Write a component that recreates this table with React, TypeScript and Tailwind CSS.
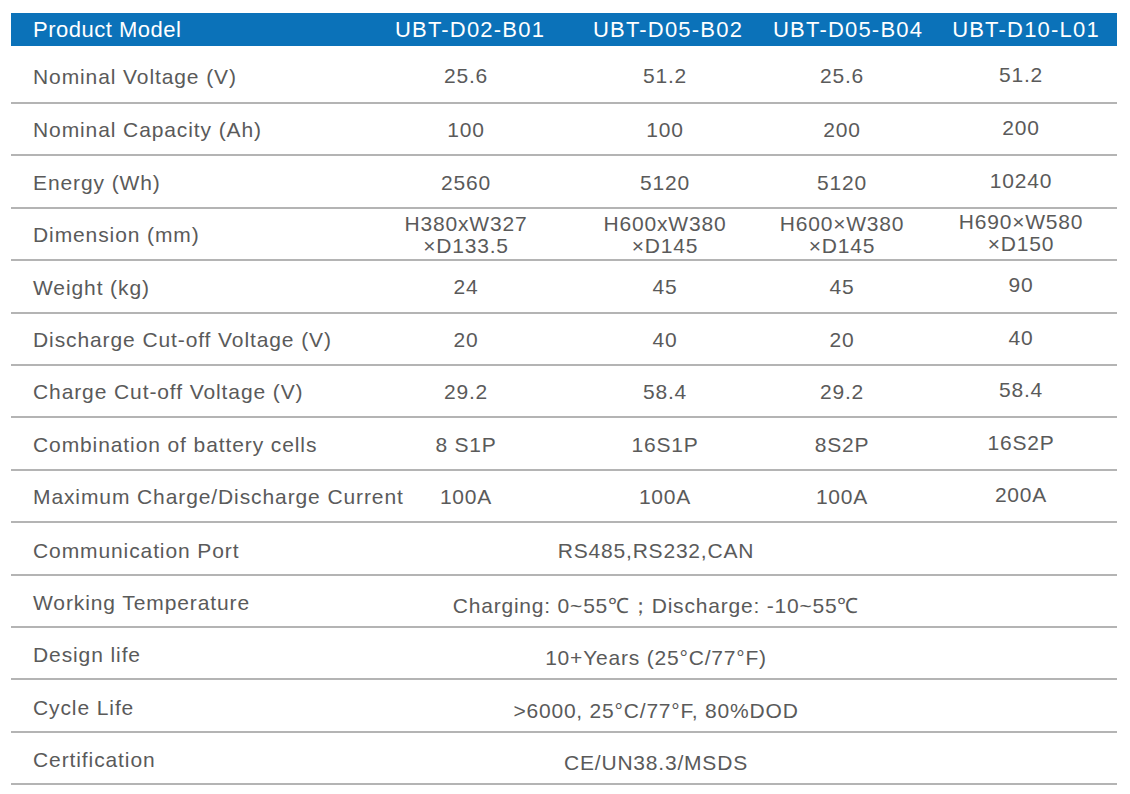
import React from "react";

type Row = {
  label: string;
  values?: React.ReactNode[];
  merged?: string;
  mergedShift?: string;
  first?: boolean;
};

const rows: Row[] = [
  { label: "Nominal Voltage (V)", values: ["25.6", "51.2", "25.6", "51.2"], first: true },
  { label: "Nominal Capacity (Ah)", values: ["100", "100", "200", "200"] },
  { label: "Energy (Wh)", values: ["2560", "5120", "5120", "10240"] },
  {
    label: "Dimension (mm)",
    values: [
      <>H380xW327<br />×D133.5</>,
      <>H600xW380<br />×D145</>,
      <>H600×W380<br />×D145</>,
      <>H690×W580<br />×D150</>,
    ],
  },
  { label: "Weight (kg)", values: ["24", "45", "45", "90"] },
  { label: "Discharge Cut-off Voltage (V)", values: ["20", "40", "20", "40"] },
  { label: "Charge Cut-off Voltage (V)", values: ["29.2", "58.4", "29.2", "58.4"] },
  { label: "Combination of battery cells", values: ["8 S1P", "16S1P", "8S2P", "16S2P"] },
  { label: "Maximum Charge/Discharge Current", values: ["100A", "100A", "100A", "200A"] },
  { label: "Communication Port", merged: "RS485,RS232,CAN", mergedShift: "translate-y-[2px]" },
  { label: "Working Temperature", merged: "Charging: 0~55℃；Discharge: -10~55℃", mergedShift: "translate-y-[5px]" },
  { label: "Design life", merged: "10+Years (25°C/77°F)", mergedShift: "translate-y-[5px]" },
  { label: "Cycle Life", merged: ">6000, 25°C/77°F, 80%DOD", mergedShift: "translate-y-[5px]" },
  { label: "Certification", merged: "CE/UN38.3/MSDS", mergedShift: "translate-y-[5px]" },
];

export default function App() {
  return (
    <div
      className="w-[1130px] h-[794px] bg-white pt-[13px] pl-[11px] text-[#5a5a5a] overflow-hidden"
      style={{ fontFamily: '"Liberation Sans", Arial, sans-serif' }}
    >
      <div className="w-[1106px]">
        <div className="grid grid-cols-[356px_198px_200px_154px_198px] h-[33px] bg-[#0b72b9] text-white text-[22px] items-center">
          <div className="pl-[22px] tracking-[0.5px]">Product Model</div>
          <div className="text-center pl-[8px] tracking-[1.2px] whitespace-nowrap">UBT-D02-B01</div>
          <div className="text-center pl-[6px] tracking-[1.2px] whitespace-nowrap">UBT-D05-B02</div>
          <div className="text-center pl-[8px] tracking-[1.2px] whitespace-nowrap">UBT-D05-B04</div>
          <div className="text-center pl-[16px] tracking-[1.2px] whitespace-nowrap">UBT-D10-L01</div>
        </div>
        {rows.map((r, i) => (
          <div
            key={i}
            className={`grid grid-cols-[356px_198px_200px_154px_198px] items-center border-b-2 border-[#b4b4b4] box-border ${
              r.first ? "h-[58px]" : "h-[52.4px]"
            }`}
          >
            <div
              className={`pl-[22px] text-[21px] tracking-[0.9px] whitespace-nowrap ${
                r.merged ? "translate-y-[2px]" : r.first ? "translate-y-[3px]" : "translate-y-[1px]"
              }`}
            >
              {r.label}
            </div>
            {r.values ? (
              r.values.map((v, j) => (
                <div
                  key={j}
                  className={`text-center text-[21px] leading-[22px] tracking-[0.8px] whitespace-nowrap ${
                    j === 3
                      ? r.first
                        ? "pl-[6px] translate-y-[1px]"
                        : "pl-[6px] -translate-y-[1px]"
                      : r.first
                      ? "translate-y-[2px]"
                      : "translate-y-[1px]"
                  }`}
                >
                  {v}
                </div>
              ))
            ) : (
              <div className={`col-span-4 text-[21px] tracking-[0.8px] whitespace-nowrap ${r.mergedShift}`}>
                <div className="w-[578px] text-center">{r.merged}</div>
              </div>
            )}
          </div>
        ))}
      </div>
    </div>
  );
}
